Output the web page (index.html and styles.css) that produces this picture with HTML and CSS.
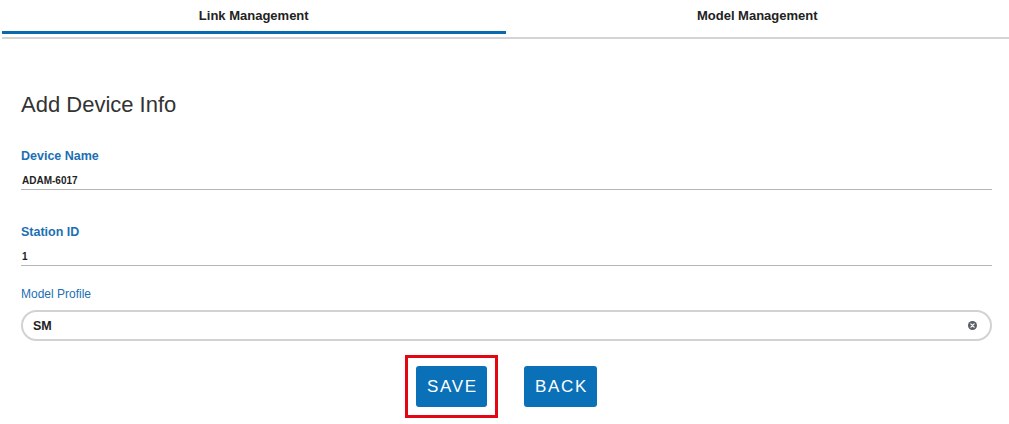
FILE: index.html
```html
<!DOCTYPE html>
<html lang="en">
<head>
<meta charset="utf-8">
<title>Add Device Info</title>
<link rel="stylesheet" href="styles.css">
</head>
<body>
<div class="page">
  <nav class="tabs">
    <div class="tab active">Link Management</div>
    <div class="tab">Model Management</div>
  </nav>
  <main class="form">
    <h1 class="title">Add Device Info</h1>
    <div class="field first">
      <label class="label">Device Name</label>
      <input class="line-input" type="text" value="ADAM-6017">
    </div>
    <div class="field">
      <label class="label">Station ID</label>
      <input class="line-input" type="text" value="1">
    </div>
    <div class="field select-field">
      <label class="label light">Model Profile</label>
      <div class="pill">
        <span class="pill-value">SM</span>
        <svg class="clear" width="9" height="9" viewBox="0 0 10 10" aria-hidden="true">
          <circle cx="5" cy="5" r="5" fill="#5a5f66"/>
          <path d="M3.2 3.2 L6.8 6.8 M6.8 3.2 L3.2 6.8" stroke="#fff" stroke-width="1.4" stroke-linecap="round"/>
        </svg>
      </div>
    </div>
    <div class="actions">
      <button class="btn highlighted">SAVE</button>
      <button class="btn">BACK</button>
    </div>
  </main>
</div>
</body>
</html>
```
FILE: styles.css
```css
html, body {
  margin: 0;
  padding: 0;
  background: #ffffff;
}
body {
  font-family: "Liberation Sans", Arial, sans-serif;
  color: #333333;
}
.page {
  padding-left: 2px;
}
.tabs {
  display: flex;
  border-bottom: 2px solid #d4d4d4;
  padding-bottom: 3px;
}
.tab {
  flex: 1;
  text-align: center;
  font-size: 13px;
  font-weight: bold;
  color: #222;
  height: 31px;
  line-height: 32px;
  border-bottom: 3px solid transparent;
}
.tab.active {
  border-bottom-color: #0a6aaf;
}
.form {
  padding: 0 17px 0 19px;
}
.title {
  margin: 53px 0 0;
  font-size: 22px;
  line-height: 26px;
  font-weight: normal;
  color: #333;
}
.field {
  display: flex;
  flex-direction: column;
  margin-top: 35px;
}
.field.first {
  margin-top: 31px;
}
.label {
  font-size: 12.5px;
  line-height: 15px;
  font-weight: bold;
  color: #1c6fb4;
  margin-bottom: 10px;
}
.label.light {
  font-size: 12px;
  font-weight: normal;
  margin-bottom: 8px;
}
.line-input {
  font-family: "Liberation Sans", Arial, sans-serif;
  font-size: 10px;
  font-weight: bold;
  line-height: 12px;
  height: 16px;
  box-sizing: border-box;
  padding: 0 0 3px 1px;
  margin: 0;
  border: none;
  border-bottom: 1px solid #b5b5b5;
  color: #222;
  outline: none;
  width: 100%;
  background: transparent;
}
.select-field {
  margin-top: 21px;
}
.pill {
  display: flex;
  align-items: center;
  justify-content: space-between;
  height: 31px;
  box-sizing: border-box;
  border: 2px solid #d2d2d2;
  border-radius: 16px;
  padding: 0 13px 0 10px;
}
.pill-value {
  font-size: 12.5px;
  font-weight: bold;
  color: #222;
}
.clear {
  display: block;
}
.actions {
  display: flex;
  justify-content: center;
  gap: 37px;
  margin-top: 25px;
  padding-bottom: 20px;
}
.btn {
  font-family: "Liberation Sans", Arial, sans-serif;
  height: 41px;
  padding: 0 9px 0 11px;
  border: none;
  border-radius: 3px;
  background: #0a70b7;
  color: #ffffff;
  font-size: 17px;
  letter-spacing: 1.7px;
  cursor: pointer;
}
.btn.highlighted {
  position: relative;
}
.btn.highlighted::after {
  content: "";
  position: absolute;
  top: -11px;
  left: -11px;
  right: -11px;
  bottom: -11px;
  border: 3px solid #e30613;
}
```
